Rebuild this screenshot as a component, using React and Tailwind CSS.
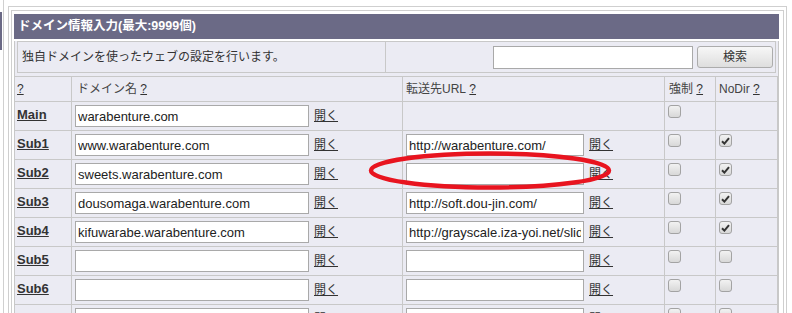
import React from "react";

const rows = [
  { label: "Main", domain: "warabenture.com", url: null, nodir: null },
  { label: "Sub1", domain: "www.warabenture.com", url: "http://warabenture.com/", nodir: true },
  { label: "Sub2", domain: "sweets.warabenture.com", url: "", nodir: true },
  { label: "Sub3", domain: "dousomaga.warabenture.com", url: "http://soft.dou-jin.com/", nodir: true },
  { label: "Sub4", domain: "kifuwarabe.warabenture.com", url: "http://grayscale.iza-yoi.net/slide/", nodir: true },
  { label: "Sub5", domain: "", url: "", nodir: false },
  { label: "Sub6", domain: "", url: "", nodir: false },
  { label: "Sub7", domain: "", url: "", nodir: false },
];

const cell = "border-r border-b border-[#c8c8c8]";

const CheckBox = ({ checked }) => (
  <span className="flex h-[13px] w-[13px] items-center justify-center rounded-[3px] border border-[#a3a3a3] bg-gradient-to-b from-[#f2f2f2] to-[#d8d8d8]">
    {checked && (
      <svg width="9" height="8" viewBox="0 0 9 8">
        <path d="M1 4.2 L3.4 6.6 L8 1.2" fill="none" stroke="#333" strokeWidth="2" />
      </svg>
    )}
  </span>
);

const Open = () => (
  <a className="ml-[5px] text-[12px] leading-none text-[#333] underline">開く</a>
);

const Field = ({ value, width }) => (
  <input
    type="text"
    readOnly
    value={value}
    className={`h-[22px] ${width} border border-[#a9a9a9] bg-white px-[2px] text-[13px] text-[#222] outline-none`}
  />
);

export default function App() {
  return (
    <div className="flex h-[313px] w-[792px] overflow-hidden bg-white font-['Liberation_Sans','Noto_Sans_CJK_JP',sans-serif] text-[#333]">
      {/* cut-off panel at the left */}
      <div className="w-[3px] shrink-0">
        <div className="mt-[12px] h-[38px] w-[2px] bg-[#6b6a86]" />
      </div>
      <div className="w-px shrink-0 bg-[#d0d0d0]" />
      <div className="w-[4px] shrink-0" />

      <div className="mt-[6px] w-[779px] shrink-0 border-x border-t border-[#cfcfcf] px-[2px] pt-[3px]">
        <div className="h-[400px] w-[773px] border-x border-t border-[#cfcfcf] pl-[2px] pt-[3px]">
          <div className="w-[765px]">
            {/* title bar */}
            <div className="flex h-[25px] items-center bg-[#6b6a86] pl-[4px] text-[12.5px] font-bold text-white">
              ドメイン情報入力(最大:9999個)
            </div>

            <div className="border-x border-[#c8c8c8] bg-[#ebebf3]">
              {/* description + search */}
              <div className="mx-[2px] mb-[3px] mt-[2px] flex h-[32px] border border-[#c8c8c8]">
                <div className="flex w-[368px] items-center border-r border-[#c8c8c8] pl-[4px] text-[12px] text-[#333]">
                  独自ドメインを使ったウェブの設定を行います。
                </div>
                <div className="flex flex-1 items-center justify-end gap-[4px] pr-[2px]">
                  <input
                    type="text"
                    readOnly
                    className="h-[23px] w-[200px] border border-[#a9a9a9] bg-white outline-none"
                  />
                  <button className="h-[22px] w-[76px] rounded-[3px] border border-[#acacac] bg-gradient-to-b from-[#f7f7f7] to-[#dedede] text-[12px] text-[#333]">
                    検索
                  </button>
                </div>
              </div>

              {/* grid */}
              <div className="grid grid-cols-[57px_331px_262px_51px_62px] border-t border-[#c8c8c8] text-[12px]">
                <div className={`${cell} flex h-[25px] items-center pl-[2px]`}>
                  <a className="underline">?</a>
                </div>
                <div className={`${cell} flex items-center pl-[5px] text-[#444]`}>
                  ドメイン名&nbsp;<a className="text-[#333] underline">?</a>
                </div>
                <div className={`${cell} flex items-center pl-[3px] text-[#444]`}>
                  転送先URL&nbsp;<a className="text-[#333] underline">?</a>
                </div>
                <div className={`${cell} flex items-center pl-[4px] text-[#444]`}>
                  強制&nbsp;<a className="text-[#333] underline">?</a>
                </div>
                <div className={`${cell} flex items-center pl-[3px] text-[#444]`}>
                  NoDir&nbsp;<a className="text-[#333] underline">?</a>
                </div>

                {rows.map((r) => (
                  <React.Fragment key={r.label}>
                    <div className={`${cell} flex h-[29px] items-center pl-[2px] pb-[2px]`}>
                      <a className="text-[13px] font-bold text-[#333] underline">{r.label}</a>
                    </div>
                    <div className={`${cell} flex items-center pl-[3px]`}>
                      <Field value={r.domain} width="w-[234px]" />
                      <Open />
                    </div>
                    <div className={`${cell} flex items-center pl-[3px]`}>
                      {r.url !== null && (
                        <>
                          <Field value={r.url} width="w-[178px]" />
                          <Open />
                        </>
                      )}
                    </div>
                    <div className={`${cell} pl-[3px] pt-[3px]`}>
                      <CheckBox checked={false} />
                    </div>
                    <div className={`${cell} pl-[3px] pt-[3px]`}>
                      {r.nodir !== null && <CheckBox checked={r.nodir} />}
                    </div>
                  </React.Fragment>
                ))}
              </div>
            </div>
          </div>
        </div>
      </div>

      {/* hand-drawn annotation */}
      <svg className="pointer-events-none absolute left-0 top-0" width="792" height="313">
        <ellipse cx="490" cy="170.5" rx="119" ry="17" fill="none" stroke="#e8141f" strokeWidth="4.5" />
      </svg>
    </div>
  );
}
